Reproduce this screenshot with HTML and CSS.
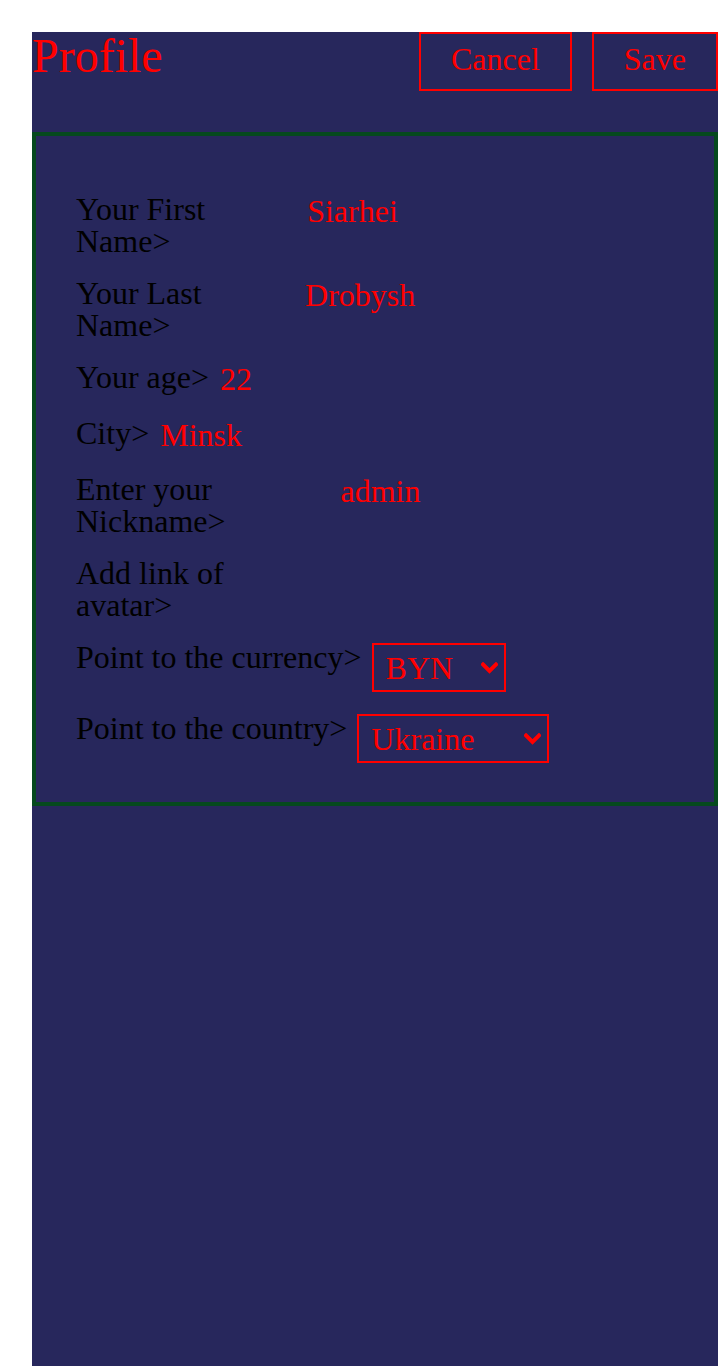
FILE: index.html
```html
<!DOCTYPE html>
<html lang="en">
<head>
<meta charset="utf-8">
<title>Profile</title>
<link rel="stylesheet" href="styles.css">
</head>
<body>
<div class="page">
  <header class="header">
    <h1 class="title">Profile</h1>
    <div class="actions">
      <button class="btn" type="button">Cancel</button>
      <button class="btn" type="button">Save</button>
    </div>
  </header>
  <form class="card">
    <div class="row">
      <label class="label" for="first">Your First Name&gt;</label>
      <input class="field" id="first" type="text" value="Siarhei">
    </div>
    <div class="row">
      <label class="label" for="last">Your Last Name&gt;</label>
      <input class="field" id="last" type="text" value="Drobysh">
    </div>
    <div class="row">
      <label class="label" for="age">Your age&gt;</label>
      <input class="field" id="age" type="text" value="22">
    </div>
    <div class="row">
      <label class="label" for="city">City&gt;</label>
      <input class="field" id="city" type="text" value="Minsk">
    </div>
    <div class="row">
      <label class="label" for="nick">Enter your Nickname&gt;</label>
      <input class="field" id="nick" type="text" value="admin">
    </div>
    <div class="row">
      <label class="label" for="avatar">Add link of avatar&gt;</label>
      <input class="field" id="avatar" type="text" value="">
    </div>
    <div class="row">
      <label class="label fixed" for="currency">Point to the currency&gt;</label>
      <span class="select-wrap">
        <select class="select select-currency" id="currency">
          <option selected>BYN</option>
          <option>USD</option>
          <option>EUR</option>
          <option>RUB</option>
        </select>
        <svg class="chevron" width="17" height="12" viewBox="0 0 17 12" aria-hidden="true"><polyline points="2,2.5 8.5,9 15,2.5" fill="none" stroke="#ff0000" stroke-width="4" stroke-linecap="square" stroke-linejoin="miter"/></svg>
      </span>
    </div>
    <div class="row">
      <label class="label fixed" for="country">Point to the country&gt;</label>
      <span class="select-wrap">
        <select class="select select-country" id="country">
          <option>Belarus</option>
          <option selected>Ukraine</option>
          <option>Russia</option>
          <option>Poland</option>
        </select>
        <svg class="chevron" width="17" height="12" viewBox="0 0 17 12" aria-hidden="true"><polyline points="2,2.5 8.5,9 15,2.5" fill="none" stroke="#ff0000" stroke-width="4" stroke-linecap="square" stroke-linejoin="miter"/></svg>
      </span>
    </div>
  </form>
</div>
</body>
</html>
```
FILE: styles.css
```css
html, body {
  margin: 0;
  padding: 0;
  background: #ffffff;
}

body {
  font-family: "Liberation Serif", "Times New Roman", serif;
  font-size: 32px;
}

.page {
  margin: 32px 0 0 32px;
  min-height: calc(100vh - 32px);
  background: #27275c;
  box-sizing: border-box;
}

.header {
  display: flex;
  justify-content: space-between;
  align-items: flex-start;
  margin-bottom: 41px;
}

.title {
  margin: 0;
  font-size: 48px;
  line-height: 48px;
  font-weight: normal;
  color: #ff0000;
}

.actions {
  display: flex;
  gap: 20px;
}

.btn {
  font: inherit;
  font-size: 32px;
  line-height: normal;
  color: #ff0000;
  background: transparent;
  border: 2px solid #ff0000;
  padding: 7px 30px 11px;
  margin: 0;
  cursor: pointer;
}

.card {
  margin: 0;
  border: 4px solid #05491d;
  padding: 57px 40px 39px;
  display: flex;
  flex-direction: column;
  gap: 20px;
}

.row {
  display: flex;
  align-items: flex-start;
  gap: 9px;
}

.label {
  color: #000000;
  line-height: 32px;
  flex: 0 1 auto;
  min-width: 0;
}

.label.fixed {
  flex: 0 0 auto;
}

.field {
  font: inherit;
  font-size: 32px;
  line-height: normal;
  color: #ff0000;
  background: transparent;
  border: 0;
  outline: none;
  padding: 0 1px 0 2px;
  margin: 0;
  width: 388px;
  height: 36px;
  min-width: 0;
  flex: 0 1 auto;
  box-sizing: border-box;
}

.select-wrap {
  position: relative;
  display: block;
  flex: 0 0 auto;
  margin: 2px 0 0 1px;
}

.select {
  display: block;
  appearance: none;
  -webkit-appearance: none;
  font: inherit;
  font-size: 32px;
  line-height: normal;
  color: #ff0000;
  background-color: transparent;
  border: 2px solid #ff0000;
  border-radius: 0;
  margin: 0;
  padding: 0 12px;
  height: 49px;
  box-sizing: border-box;
}

.select-currency {
  width: 134px;
}

.select-country {
  width: 192px;
}

.chevron {
  position: absolute;
  right: 8px;
  top: 50%;
  transform: translateY(-50%);
  pointer-events: none;
}
```
